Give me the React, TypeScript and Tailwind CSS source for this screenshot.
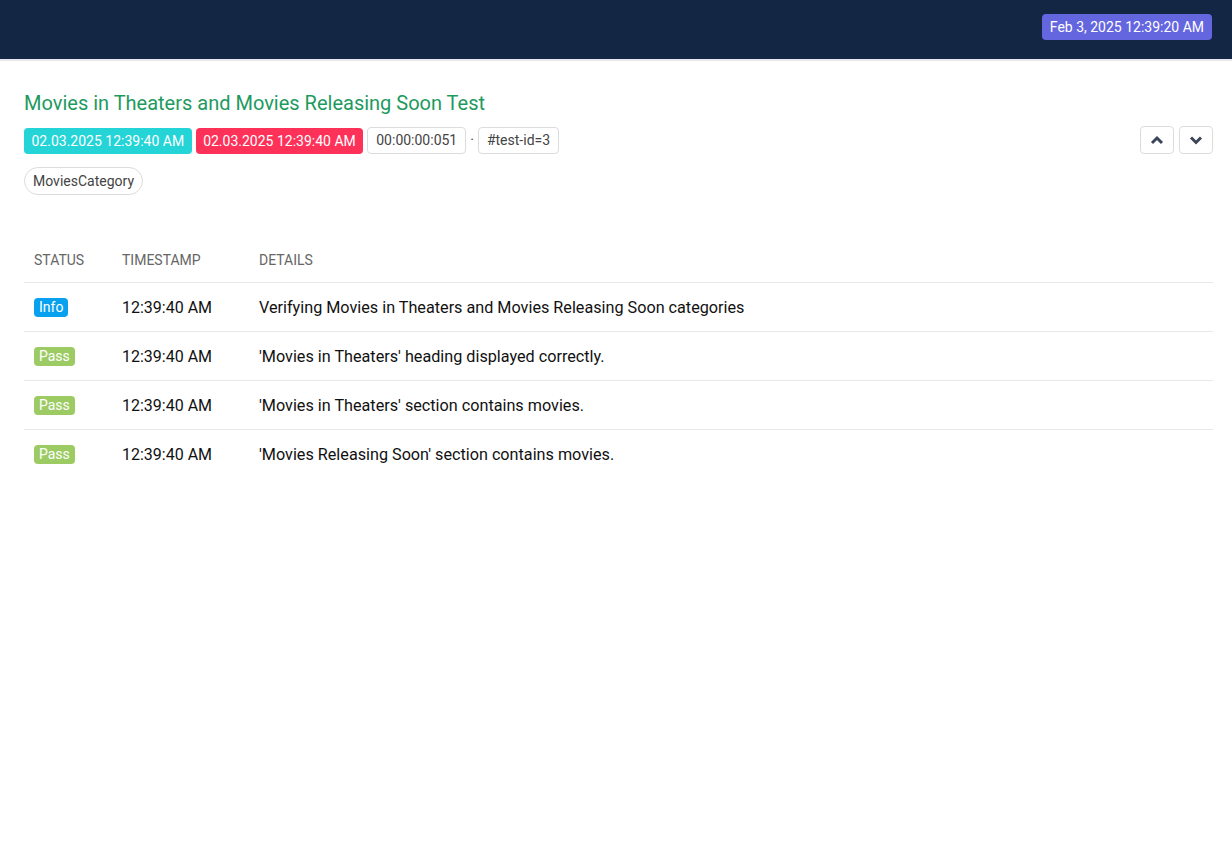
import React from "react";

const rows = [
  { status: "Info", time: "12:39:40 AM", details: "Verifying Movies in Theaters and Movies Releasing Soon categories" },
  { status: "Pass", time: "12:39:40 AM", details: "'Movies in Theaters' heading displayed correctly." },
  { status: "Pass", time: "12:39:40 AM", details: "'Movies in Theaters' section contains movies." },
  { status: "Pass", time: "12:39:40 AM", details: "'Movies Releasing Soon' section contains movies." },
];

export default function App() {
  return (
    <div className="min-h-[856px] bg-white" style={{ fontFamily: "Roboto, 'Liberation Sans', sans-serif" }}>
      <header className="h-[61px] bg-[#132744] border-b-2 border-[#e6e8eb] flex items-start justify-end pr-5 pt-[14px]">
        <span className="h-[26px] px-[8px] rounded-[4px] bg-[#6466e0] text-white text-[14px] leading-[26px]">
          Feb 3, 2025 12:39:20 AM
        </span>
      </header>
      <main className="pl-6 pr-[19px] pt-[29px]">
        <h1 className="text-[20px] leading-[26px] text-[#1d9a5e]">Movies in Theaters and Movies Releasing Soon Test</h1>
        <div className="mt-[11px] flex items-center justify-between">
          <div className="flex items-center gap-1 text-[14px]">
            <span className="h-[26px] px-[7.5px] rounded-[4px] bg-[#24d4d7] text-white leading-[26px]">02.03.2025 12:39:40 AM</span>
            <span className="h-[26px] px-[7.5px] rounded-[4px] bg-[#fe3159] text-white leading-[26px]">02.03.2025 12:39:40 AM</span>
            <span className="h-[27px] px-[8px] rounded-[4px] border border-[#dcdcdc] text-[#444] leading-[25px]">00:00:00:051</span>
            <span className="text-[#444]">·</span>
            <span className="h-[27px] px-[8px] rounded-[4px] border border-[#dcdcdc] text-[#444] leading-[25px]">#test-id=3</span>
          </div>
          <div className="flex items-center gap-[5px] -mt-[1px]">
            <button className="w-[34px] h-[28px] rounded-[4px] border border-[#dcdcdc] flex items-center justify-center">
              <svg width="14" height="14" viewBox="0 0 14 14"><path d="M2 10 L7 5 L12 10" fill="none" stroke="#3c4658" strokeWidth="3" /></svg>
            </button>
            <button className="w-[34px] h-[28px] rounded-[4px] border border-[#dcdcdc] flex items-center justify-center">
              <svg width="14" height="14" viewBox="0 0 14 14"><path d="M2 4.5 L7 9.5 L12 4.5" fill="none" stroke="#3c4658" strokeWidth="3" /></svg>
            </button>
          </div>
        </div>
        <div className="mt-[13px] flex">
          <span className="h-[28px] px-[8px] rounded-full border border-[#dcdcdc] text-[14px] text-[#444] leading-[26px]">MoviesCategory</span>
        </div>
        <table className="mt-[45px] w-full border-collapse">
          <thead>
            <tr className="border-b border-[#e8e8e8]">
              <th className="text-left font-normal text-[14px] text-[#666] h-[42px] pl-[10px] w-[98px]">STATUS</th>
              <th className="text-left font-normal text-[14px] text-[#666] h-[42px] w-[137px]">TIMESTAMP</th>
              <th className="text-left font-normal text-[14px] text-[#666] h-[42px]">DETAILS</th>
            </tr>
          </thead>
          <tbody>
            {rows.map((r, i) => (
              <tr key={i} className={i < rows.length - 1 ? "border-b border-[#e8e8e8]" : ""}>
                <td className="h-[49px] pl-[10px] pt-[1px]">
                  {r.status === "Info" ? (
                    <span className="inline-block h-[19px] px-[5px] rounded-[4px] bg-[#07a1f0] text-white text-[14px] leading-[19px]">Info</span>
                  ) : (
                    <span className="inline-block h-[19px] px-[5px] rounded-[4px] bg-[#9ccb64] text-white text-[14px] leading-[19px]">Pass</span>
                  )}
                </td>
                <td className="h-[49px] pt-[3px] text-[16px] text-[#111]">{r.time}</td>
                <td className="h-[49px] pt-[3px] text-[16.2px] text-[#111]">{r.details}</td>
              </tr>
            ))}
          </tbody>
        </table>
      </main>
    </div>
  );
}
